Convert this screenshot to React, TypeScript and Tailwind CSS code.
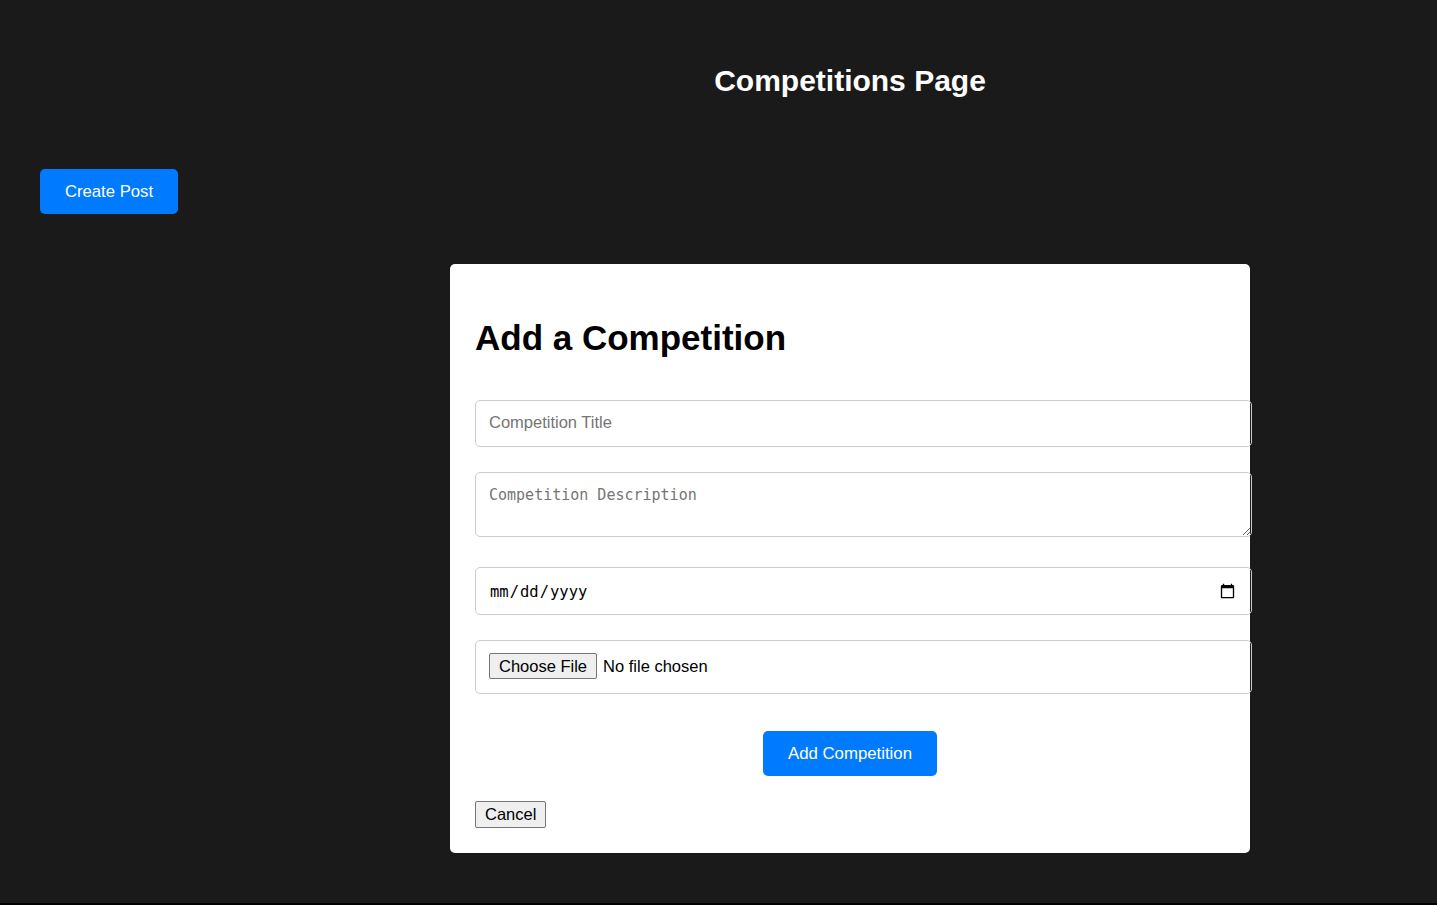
import { useState } from 'react'

const sans = "font-['Liberation_Sans',Arial,sans-serif]"

export default function App() {
  const [open, setOpen] = useState(true)

  return (
    <div className="h-[905px] bg-black">
      <div className={`h-[903px] bg-[#1a1a1a] ${sans}`}>
        {/* Header */}
        <div className="pl-[263px] pt-[64px]">
          <h1 className="text-center text-[30px] font-bold leading-[34px] text-white">
            Competitions Page
          </h1>
        </div>

        <div className="pl-[40px] pt-[71px]">
          <button
            onClick={() => setOpen(true)}
            className="h-[45px] w-[138px] rounded-[5px] bg-[#007bff] text-[16.7px] text-white"
          >
            Create Post
          </button>
        </div>

        {/* Modal */}
        {open && (
          <div className="flex pl-[450px] pt-[50px]">
            <div className="flex w-[800px] flex-col rounded-[5px] bg-white px-[25px] pb-[25px] pt-[54px]">
              <h2 className="text-[35px] font-bold leading-[40px] text-black">
                Add a Competition
              </h2>

              <input
                type="text"
                placeholder="Competition Title"
                className="mt-[42px] h-[47px] w-[777px] rounded-[5px] border border-[#cccccc] px-[13px] pb-[2px] text-[16.5px] text-black placeholder:text-[#757575] focus:outline-none"
              />

              <textarea
                placeholder="Competition Description"
                className="mt-[25px] block h-[65px] w-[777px] rounded-[5px] border border-[#cccccc] px-[13px] pb-[11px] pt-[12px] font-['DejaVu_Sans_Mono',monospace] text-[15px] leading-[20px] text-black placeholder:text-[#757575] focus:outline-none"
              />

              <input
                type="date"
                className="mt-[30px] h-[48px] w-[777px] rounded-[5px] border border-[#cccccc] px-[13px] pt-[3px] font-['DejaVu_Sans_Mono',monospace] text-[15.5px] text-black focus:outline-none [&::-webkit-calendar-picker-indicator]:h-[17px] [&::-webkit-calendar-picker-indicator]:w-[17px] [&::-webkit-calendar-picker-indicator]:-mt-[3px]"
              />

              <div className="mt-[25px] flex h-[54px] w-[777px] items-center rounded-[5px] border border-[#cccccc] px-[13px] pb-[2px]">
                <input
                  type="file"
                  className="text-[16.5px] text-black file:mr-[6px] file:h-[26px] file:rounded-[2px] file:border file:border-[#767676] file:bg-[#efefef] file:px-[9px] file:text-[16.5px] file:text-black"
                />
              </div>

              <div className="mt-[37px] flex justify-center">
                <button className="h-[45px] w-[174px] rounded-[5px] bg-[#007bff] text-[16.8px] text-white">
                  Add Competition
                </button>
              </div>

              <div className="mt-[25px]">
                <button
                  onClick={() => setOpen(false)}
                  className="h-[27px] rounded-[2px] border border-[#767676] bg-[#efefef] px-[9px] pb-[1px] text-[16.5px] leading-[20px] text-black"
                >
                  Cancel
                </button>
              </div>
            </div>
          </div>
        )}
      </div>
    </div>
  )
}
